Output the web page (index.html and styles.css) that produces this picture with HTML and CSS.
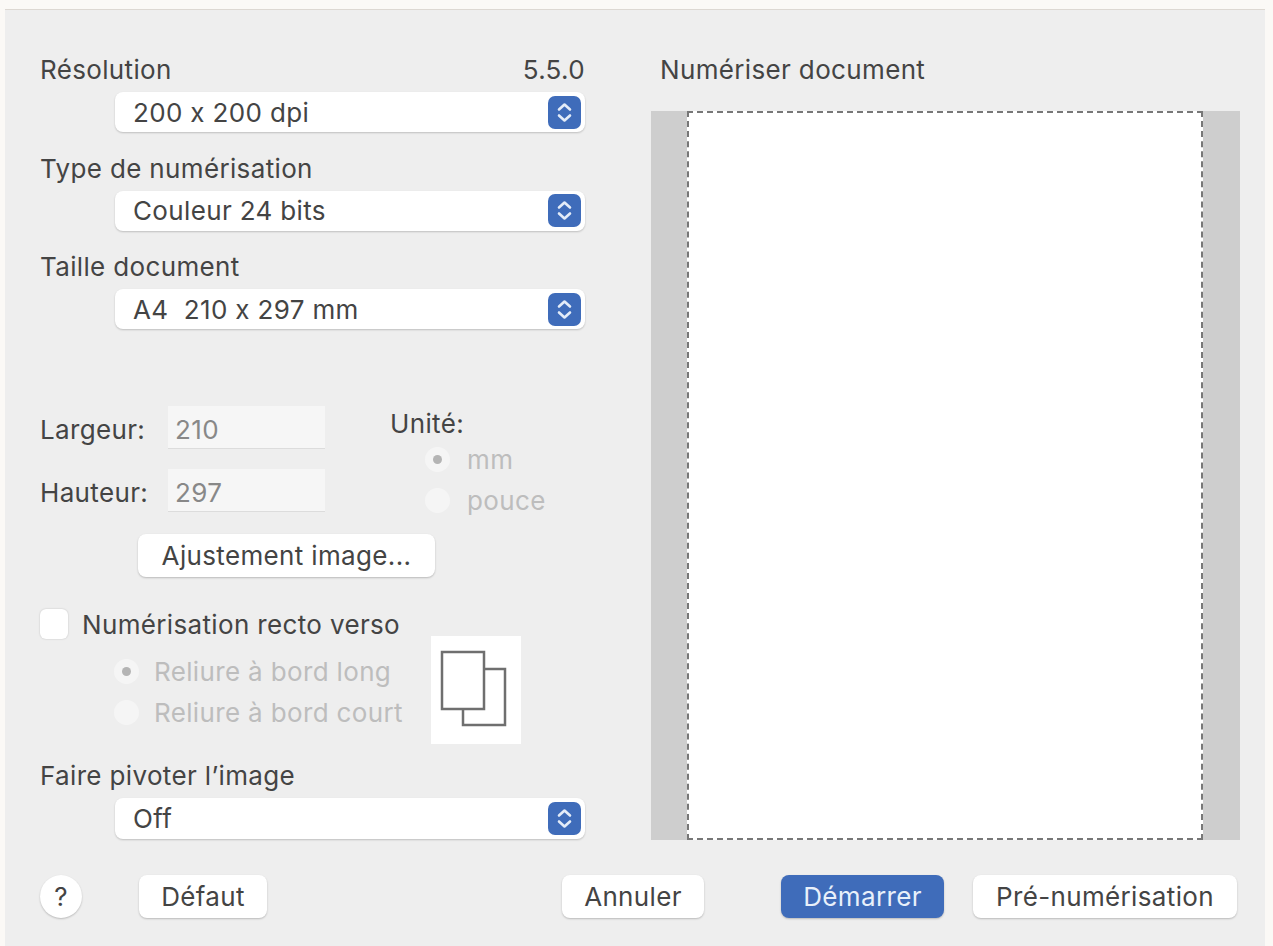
FILE: index.html
```html
<!DOCTYPE html>
<html lang="fr">
<head>
    <meta charset="UTF-8">
    <meta name="viewport" content="width=device-width, initial-scale=1.0">
    <title>Numériser document</title>
    <link rel="stylesheet" href="styles.css">
</head>
<body>

<svg class="defs" width="0" height="0">
    <symbol id="stepper" viewBox="0 0 33 33">
        <rect width="33" height="33" rx="7" fill="#3f6cba"/>
        <path d="M11 13.5 L16.5 8.5 L22 13.5 M11 19.5 L16.5 24.5 L22 19.5" fill="none" stroke="#e4ecf8" stroke-width="2.6" stroke-linecap="round" stroke-linejoin="round"/>
    </symbol>
</svg>

<div class="window">
    <div class="columns">
        <div class="settings">
            <div class="label-row first-label">
                <span>Résolution</span>
                <span class="version">5.5.0</span>
            </div>
            <div class="select"><span>200 x 200 dpi</span><svg class="stepper"><use href="#stepper"/></svg></div>

            <div class="label-row"><span>Type de numérisation</span></div>
            <div class="select"><span>Couleur 24 bits</span><svg class="stepper"><use href="#stepper"/></svg></div>

            <div class="label-row"><span>Taille document</span></div>
            <div class="select"><span>A4&nbsp; 210 x 297 mm</span><svg class="stepper"><use href="#stepper"/></svg></div>

            <div class="size-row">
                <div class="size-fields">
                    <div class="size-field"><span class="size-label">Largeur:</span><div class="field">210</div></div>
                    <div class="size-field"><span class="size-label">Hauteur:</span><div class="field">297</div></div>
                </div>
                <div class="units">
                    <div class="units-title">Unité:</div>
                    <div class="radio-row unit-radio"><span class="radio on"></span><span>mm</span></div>
                    <div class="radio-row unit-radio"><span class="radio"></span><span>pouce</span></div>
                </div>
            </div>

            <button class="btn adjust">Ajustement image...</button>

            <div class="duplex">
                <div class="duplex-options">
                    <div class="check-row"><span class="checkbox"></span><span>Numérisation recto verso</span></div>
                    <div class="radio-row bind-radio"><span class="radio on"></span><span>Reliure à bord long</span></div>
                    <div class="radio-row bind-radio"><span class="radio"></span><span>Reliure à bord court</span></div>
                </div>
                <div class="duplex-pic">
                    <svg width="90" height="108" viewBox="0 0 90 108">
                        <rect x="32" y="33" width="42" height="56" fill="#fff" stroke="#6f6f6f" stroke-width="2.5"/>
                        <rect x="11" y="16" width="42" height="57" fill="#fff" stroke="#6f6f6f" stroke-width="2.5"/>
                    </svg>
                </div>
            </div>

            <div class="label-row rotate-label"><span>Faire pivoter l’image</span></div>
            <div class="select last-select"><span>Off</span><svg class="stepper"><use href="#stepper"/></svg></div>
        </div>

        <div class="preview">
            <div class="preview-title">Numériser document</div>
            <div class="preview-bed"><div class="preview-page"></div></div>
        </div>
    </div>

    <div class="footer">
        <button class="help">?</button>
        <button class="btn default-btn">Défaut</button>
        <button class="btn cancel-btn">Annuler</button>
        <button class="btn primary">Démarrer</button>
        <button class="btn prescan">Pré-numérisation</button>
    </div>
</div>

</body>
</html>
```

FILE: styles.css
```css
body {
    margin: 0;
    height: 946px;
    overflow: hidden;
    background: #fbf9f6;
    font-family: Inter, "Liberation Sans", sans-serif;
    font-size: 26px;
    letter-spacing: 0.35px;
    font-feature-settings: "calt" 0;
    color: #444;
}
.defs {
    position: absolute;
}
.window {
    margin: 9px 8px 0 5px;
    height: 937px;
    box-sizing: border-box;
    padding: 45px 20px 0 35px;
    background: #eeeeee;
    border-top: 1px solid #ddd8d2;
}
.columns {
    display: flex;
    gap: 66px;
}
.settings {
    width: 545px;
}
.label-row {
    display: flex;
    justify-content: space-between;
    height: 30px;
    line-height: 30px;
}
.first-label {
    margin-bottom: 1px;
}
.select {
    display: flex;
    align-items: center;
    justify-content: space-between;
    height: 40px;
    margin: 7px 0 21.5px 75px;
    padding: 0 4px 0 18px;
    background: #fff;
    border-radius: 8px;
    box-shadow: 0 1px 2px rgba(0, 0, 0, 0.2);
}
.last-select {
    height: 41px;
    margin-bottom: 0;
}
.stepper {
    width: 33px;
    height: 33px;
}
.size-row {
    display: flex;
    margin-top: 77px;
}
.size-field {
    display: flex;
    align-items: center;
    margin-bottom: 20px;
}
.size-label {
    width: 128px;
    padding-top: 3px;
}
.field {
    width: 157px;
    height: 43px;
    line-height: 48px;
    box-sizing: border-box;
    padding-left: 7px;
    background: #f6f6f6;
    border-bottom: 1px solid #dcdcdc;
    color: #888;
}
.units {
    margin-left: 65px;
    margin-top: 3px;
}
.units-title {
    height: 30px;
    line-height: 30px;
}
.radio-row {
    display: flex;
    align-items: center;
    color: #bdbdbd;
}
.radio {
    position: relative;
    flex: none;
    width: 25px;
    height: 25px;
    border-radius: 50%;
    background: #f5f5f5;
}
.radio.on::after {
    content: "";
    position: absolute;
    left: 8px;
    top: 8px;
    width: 9px;
    height: 9px;
    border-radius: 50%;
    background: #b4b4b4;
}
.unit-radio {
    height: 41px;
    margin-left: 35px;
    gap: 17px;
}
.btn {
    height: 43px;
    padding: 0;
    border: 0;
    border-radius: 8px;
    background: #fff;
    font: inherit;
    letter-spacing: inherit;
    color: #444;
    box-shadow: 0 1px 2px rgba(0, 0, 0, 0.22);
}
.adjust {
    display: block;
    width: 297px;
    margin: 2px 0 0 98px;
}
.duplex {
    display: flex;
    margin-top: 32px;
    height: 137px;
}
.duplex-options {
    width: 391px;
}
.check-row {
    display: flex;
    align-items: center;
    gap: 14px;
    height: 30px;
    margin-bottom: 12px;
}
.checkbox {
    width: 28px;
    height: 30px;
    box-sizing: border-box;
    background: #fff;
    border-radius: 6px;
    box-shadow: 0 0 2px rgba(0, 0, 0, 0.2);
}
.bind-radio {
    height: 41px;
    margin-left: 74px;
    gap: 15px;
}
.duplex-pic {
    width: 90px;
    height: 108px;
    margin-top: 27px;
    background: #fff;
}
.rotate-label {
    margin-top: 15px;
}
.preview {
    width: 589px;
}
.preview-title {
    height: 30px;
    line-height: 30px;
    margin: 0 0 26px 9px;
}
.preview-bed {
    height: 729px;
    padding: 0 37px 0 36px;
    background: #cecece;
}
.preview-page {
    height: 100%;
    box-sizing: border-box;
    background: #fff;
    border: 2px dashed #777;
}
.footer {
    display: flex;
    align-items: center;
    margin-top: 35px;
}
.help {
    width: 42px;
    height: 43px;
    padding: 0;
    border: 0;
    border-radius: 50%;
    background: #fff;
    font: inherit;
    color: #444;
    box-shadow: 0 1px 2px rgba(0, 0, 0, 0.22);
}
.default-btn {
    width: 128px;
    margin-left: 57px;
}
.cancel-btn {
    width: 142px;
    margin-left: 295px;
}
.primary {
    width: 163px;
    margin-left: 77px;
    background: #3f6cba;
    color: #e8f0fa;
}
.prescan {
    width: 264px;
    margin-left: 29px;
}
```
